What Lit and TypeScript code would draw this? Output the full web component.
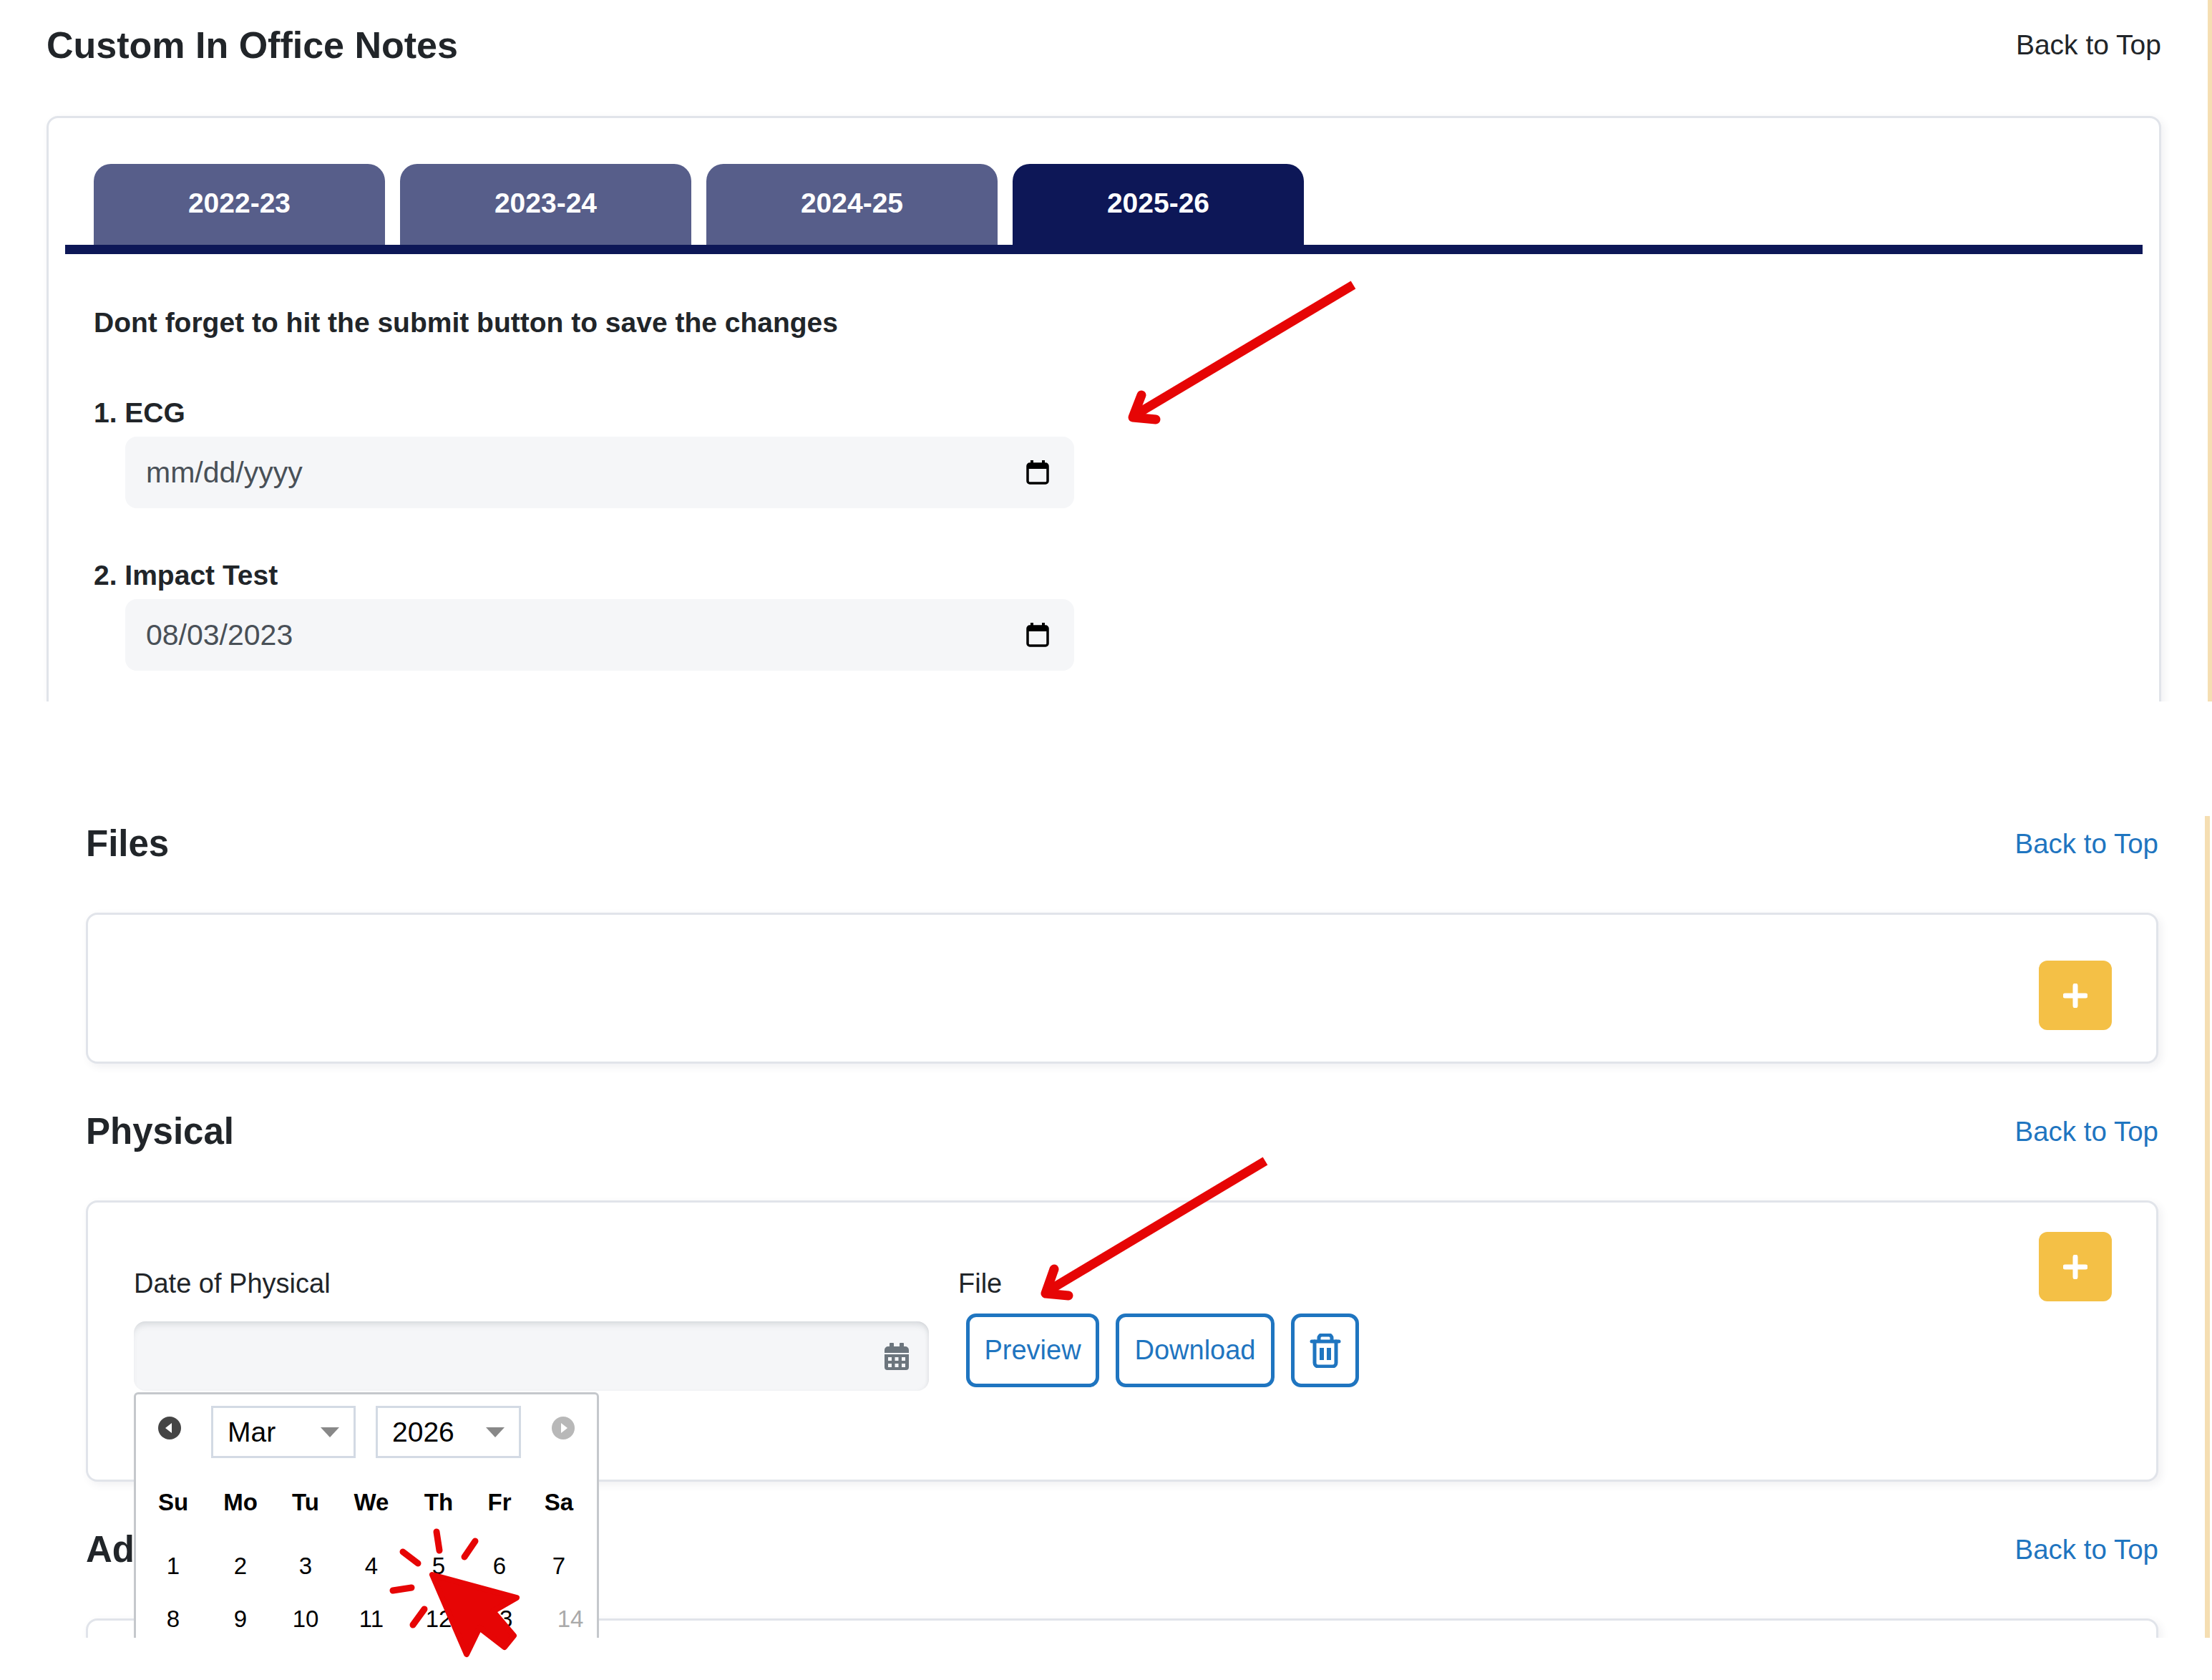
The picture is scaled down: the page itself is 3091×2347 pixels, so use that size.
import { LitElement, html, css, svg } from "lit";
import { customElement } from "lit/decorators.js";

const RED = "#e60505";

const nativeCal = html`<svg class="ncal" viewBox="0 0 32 36" width="32" height="36">
  <path d="M8 1v5M24 1v5" stroke="#000" stroke-width="4" fill="none"/>
  <rect x="2" y="6" width="28" height="27" rx="3" fill="none" stroke="#000" stroke-width="3.5"/>
  <rect x="2" y="5" width="28" height="8" rx="2" fill="#000"/>
</svg>`;

const faCal = html`<svg class="fcal" viewBox="0 0 34 38" width="34" height="38">
  <path fill="#6c757d" d="M8 0h4a1 1 0 0 1 1 1v4h8V1a1 1 0 0 1 1-1h4a1 1 0 0 1 1 1v4h2a5 5 0 0 1 5 5v4H0v-4a5 5 0 0 1 5-5h2V1a1 1 0 0 1 1-1z"/>
  <path fill="#6c757d" fill-rule="evenodd" d="M0 16h34v18a4 4 0 0 1-4 4H4a4 4 0 0 1-4-4zM5 20v5h5v-5zm9.500 0v5h5v-5zM24 20v5h5v-5zM5 29v5h5v-5zm9.500 0v5h5v-5zM24 29v5h5v-5z"/>
</svg>`;

const trash = html`<svg viewBox="0 0 44 48" width="44" height="48" fill="none" stroke="#1f75c0" stroke-width="5" stroke-linecap="round" stroke-linejoin="round">
  <path d="M3 11h38"/>
  <path d="M13 10V6a4 4 0 0 1 4-4h10a4 4 0 0 1 4 4v4"/>
  <path d="M7 11v30a5 5 0 0 0 5 5h20a5 5 0 0 0 5-5V11"/>
  <path d="M17 20v17M27 20v17" stroke-width="6" stroke-linecap="butt"/>
</svg>`;

const plus = html`<svg viewBox="0 0 34 34" width="34" height="34"><path d="M17 3v28M3 17h28" stroke="#fff" stroke-width="7" stroke-linecap="round"/></svg>`;

const prevIcon = html`<svg viewBox="0 0 32 32" width="32" height="32"><circle cx="16" cy="16" r="16" fill="#454545"/><path d="M19 9v14l-9-7z" fill="#fff"/></svg>`;
const nextIcon = html`<svg viewBox="0 0 32 32" width="32" height="32"><circle cx="16" cy="16" r="16" fill="#b8b8b8"/><path d="M13 9v14l9-7z" fill="#fff"/></svg>`;

const overlay = svg`
  <g fill="none" stroke="${RED}" stroke-width="13">
    <path d="M1891 398L1584 581"/>
    <path d="M1768 1622L1460 1806"/>
  </g>
  <g fill="none" stroke="${RED}" stroke-width="13" stroke-linecap="round" stroke-linejoin="round">
    <path d="M1595 552L1583 583L1615 586"/>
    <path d="M1473 1773L1461 1807L1493 1810"/>
  </g>
  <path fill="${RED}" stroke="${RED}" stroke-width="8" stroke-linejoin="round"
    d="M604 2200L722 2232L689 2251L718 2285L705 2301L670 2274L652 2311Z"/>
  <g fill="none" stroke="${RED}" stroke-width="9" stroke-linecap="round">
    <path d="M610 2140L614 2166"/>
    <path d="M664 2153L649 2175"/>
    <path d="M563 2168L584 2184"/>
    <path d="M549 2222L575 2218"/>
    <path d="M593 2248L577 2270"/>
  </g>`;

@customElement("app-root")
export class AppRoot extends LitElement {
  static styles = css`
    :host { display: block; position: relative; width: 3091px; height: 2347px; background: #fff;
      font-family: "Liberation Sans", Arial, sans-serif; color: #212529; overflow: hidden; }
    .shot { position: relative; overflow: hidden; box-sizing: border-box; }
    .shot1 { height: 980px; padding: 0 71px 0 65px; }
    .shot2 { margin-top: 160px; height: 1148px; padding: 0 75px 0 120px; }
    .strip { position: absolute; top: 0; bottom: 0; background: #f5deb2; }
    .shot1 .strip { left: 3085px; width: 6px; }
    .shot2 .strip { left: 3081px; width: 7px; }

    .head { display: flex; justify-content: space-between; align-items: center; }
    .shot1 .head { height: 126px; margin-bottom: 36px; }
    .shot2 .head { height: 78px; margin-bottom: 57px; }
    h2 { margin: 0; font-size: 52px; font-weight: 700; line-height: 60px; }
    .shot2 h2 { font-size: 51px; }
    .back { font-size: 39px; line-height: 46px; }
    .shot2 .back { font-size: 38.500px; color: #1f75c0; }

    .card { box-sizing: border-box; background: #fff; border: 3px solid #e1e4ea; border-radius: 16px;
      box-shadow: 4px 4px 12px rgba(60, 70, 90, 0.08); }
    .big { padding: 64px 23px 0; height: 1200px; }
    .tabs { display: flex; gap: 21px; padding-left: 40px; border-bottom: 13px solid #0d1757; }
    .tab { box-sizing: border-box; width: 407px; height: 113px; padding-bottom: 4px; display: flex; align-items: center; justify-content: center;
      border-radius: 24px 24px 0 0; background: #575e8a; color: #fff; font-weight: 700; font-size: 39px; }
    .tab.on { background: #0d1757; }
    .form { padding: 73px 0 0 40px; }
    .notice { font-weight: 700; font-size: 39px; line-height: 46px; margin-bottom: 80px; }
    .lbl { font-weight: 700; font-size: 39px; line-height: 46px; margin-bottom: 10px; }
    .field { box-sizing: border-box; width: 1326px; height: 100px; margin: 0 0 71px 44px; padding: 0 35px 0 29px;
      display: flex; align-items: center; justify-content: space-between; background: #f5f6f8;
      border-radius: 16px; color: #495057; font-size: 41px; }

    .files { height: 211px; display: flex; justify-content: flex-end; padding: 64px 62px 0 0; margin-bottom: 56px; }
    .plus { width: 102px; height: 97px; border-radius: 12px; background: #f4c046;
      display: flex; align-items: center; justify-content: center; flex: none; }
    .phys { position: relative; height: 393px; display: flex; padding: 0 62px 0 64px; margin-bottom: 56px; }
    .phys .plus { margin-top: 41px; }
    .row { flex: 1; display: flex; gap: 41px; padding-top: 90px; }
    .col { display: flex; flex-direction: column; }
    .date { position: relative; width: 1111px; }
    .clbl { font-size: 38px; line-height: 46px; }
    .dinput { box-sizing: border-box; height: 97px; margin-top: 30px; padding-right: 28px; border-radius: 16px;
      display: flex; align-items: center; justify-content: flex-end; background: #f5f6f8;
      box-shadow: inset 0 8px 10px -4px rgba(80, 90, 100, 0.18), inset -3px 0 6px -3px rgba(80, 90, 100, 0.12); }
    .btns { display: flex; gap: 23px; margin: 19px 0 0 11px; }
    .btn { box-sizing: border-box; height: 103px; border: 5px solid #1f75c0; border-radius: 14px; color: #1f75c0;
      font-size: 38px; display: flex; align-items: center; justify-content: center; background: #fff; }
    .b1 { width: 186px; }
    .b2 { width: 222px; }
    .b3 { width: 95px; }

    .cal { position: absolute; left: 0; top: 175px; box-sizing: border-box; width: 650px; height: 560px; background: #fff;
      border: 3px solid #c5c8cc; border-radius: 6px; color: #000; z-index: 2; }
    .calhead { display: flex; align-items: flex-start; padding: 16px 0 0 31px; }
    .nav { margin-top: 15px; width: 32px; height: 32px; }
    .sel { box-sizing: border-box; width: 202px; height: 73px; border: 3px solid #d3dae4; padding: 0 20px 0 20px;
      font-size: 39px; display: flex; align-items: center; justify-content: space-between; }
    .sel i { width: 0; height: 0; border: 13px solid transparent; border-top: 14px solid #888; border-bottom: 0; }
    .s1 { margin-left: 42px; }
    .s2 { margin: 0 43px 0 28px; width: 203px; }
    .days { display: grid; grid-template-columns: 104px 84px 98px 86px 102px 68px 98px;
      grid-template-rows: 104px 74px 74px; margin-top: 10px; font-size: 33px; text-align: center; }
    .days > div { display: flex; align-items: center; justify-content: center; }
    .days .th { font-weight: 700; }
    .days .off { color: #aaa; padding-left: 32px; }

    .over { position: absolute; left: 0; top: 0; pointer-events: none; z-index: 5; }
  `;

  render() {
    const heads = ["Su", "Mo", "Tu", "We", "Th", "Fr", "Sa"];
    const days = ["1", "2", "3", "4", "5", "6", "7", "8", "9", "10", "11", "12", "13"];
    return html`
      <section class="shot shot1">
        <div class="strip"></div>
        <div class="head"><h2>Custom In Office Notes</h2><span class="back">Back to Top</span></div>
        <div class="card big">
          <div class="tabs">
            <div class="tab">2022-23</div>
            <div class="tab">2023-24</div>
            <div class="tab">2024-25</div>
            <div class="tab on">2025-26</div>
          </div>
          <div class="form">
            <div class="notice">Dont forget to hit the submit button to save the changes</div>
            <div class="lbl">1. ECG</div>
            <div class="field"><span>mm/dd/yyyy</span>${nativeCal}</div>
            <div class="lbl">2. Impact Test</div>
            <div class="field"><span>08/03/2023</span>${nativeCal}</div>
          </div>
        </div>
      </section>
      <section class="shot shot2">
        <div class="strip"></div>
        <div class="head"><h2>Files</h2><span class="back">Back to Top</span></div>
        <div class="card files"><div class="plus">${plus}</div></div>
        <div class="head"><h2>Physical</h2><span class="back">Back to Top</span></div>
        <div class="card phys">
          <div class="row">
            <div class="col date">
              <div class="clbl">Date of Physical</div>
              <div class="dinput">${faCal}</div>
              <div class="cal">
                <div class="calhead">
                  <div class="nav">${prevIcon}</div>
                  <div class="sel s1"><span>Mar</span><i></i></div>
                  <div class="sel s2"><span>2026</span><i></i></div>
                  <div class="nav">${nextIcon}</div>
                </div>
                <div class="days">
                  ${heads.map((h) => html`<div class="th">${h}</div>`)}
                  ${days.map((d) => html`<div>${d}</div>`)}
                  <div class="off">14</div>
                </div>
              </div>
            </div>
            <div class="col">
              <div class="clbl">File</div>
              <div class="btns">
                <div class="btn b1">Preview</div>
                <div class="btn b2">Download</div>
                <div class="btn b3">${trash}</div>
              </div>
            </div>
          </div>
          <div class="plus">${plus}</div>
        </div>
        <div class="head"><h2>Ad</h2><span class="back">Back to Top</span></div>
        <div class="card" style="height:200px"></div>
      </section>
      <svg class="over" width="3091" height="2347" viewBox="0 0 3091 2347">${overlay}</svg>
    `;
  }
}
